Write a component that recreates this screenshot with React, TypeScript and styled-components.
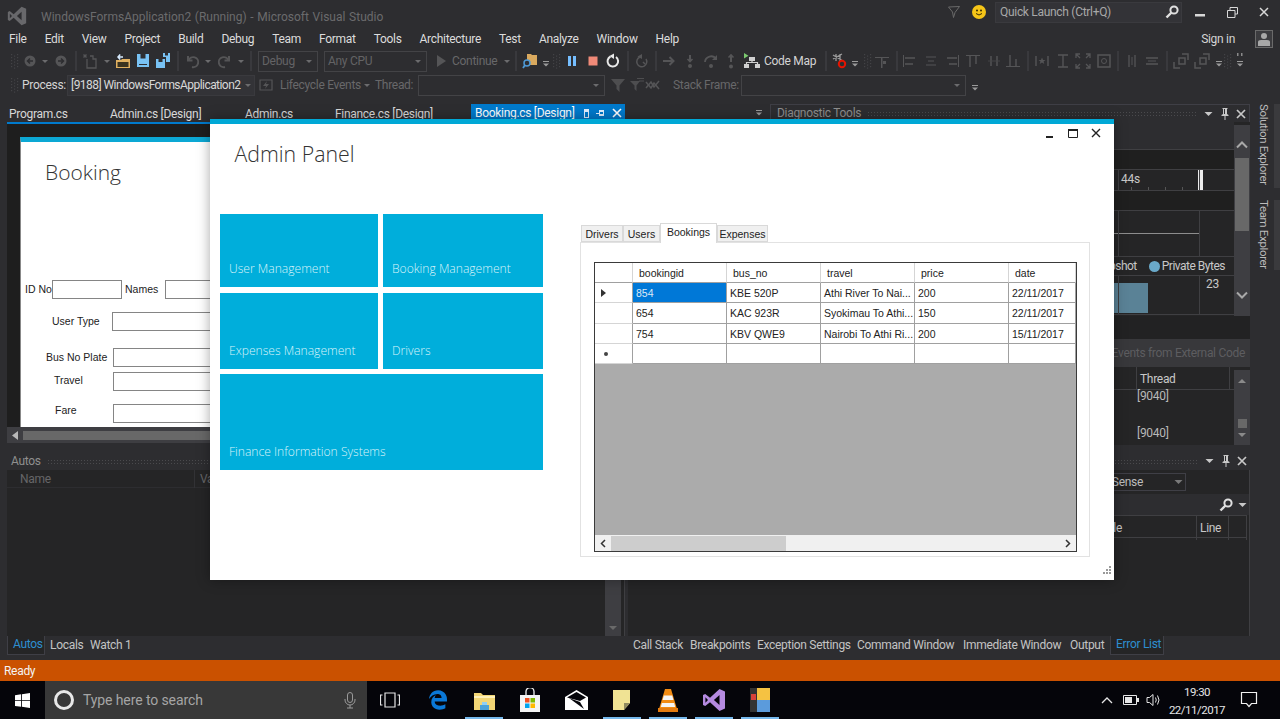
import React from "react";
import styled, { createGlobalStyle } from "styled-components";
import { FaEdgeLegacy } from "react-icons/fa6";

const UI = `Roboto, "Liberation Sans", sans-serif`;
const LIGHT = `"Open Sans", "Liberation Sans", sans-serif`;
const WIN = `"Liberation Sans", Arial, sans-serif`;

const Global = createGlobalStyle`
  html, body { margin: 0; padding: 0; background: #2d2d30; overflow: hidden; }
  * { box-sizing: border-box; }
`;

const Page = styled.div`
  position: relative; width: 1280px; height: 719px; overflow: hidden;
  background: #2d2d30; font-family: ${UI}; font-size: 12px; color: #d0d0d0; letter-spacing: -0.3px;
  display: flex; flex-direction: column;
`;

/* ---------- glyphs ---------- */
const D = "#555557";
const line = (d: string, c = D, w = 1.4) => <path d={d} fill="none" stroke={c} strokeWidth={w} />;
const fill = (d: string, c = D) => <path d={d} fill={c} />;
const BL = "#78c2f4";

const GLYPHS: Record<string, React.ReactNode> = {
  none: null,
  grip: <g fill="#434346">{[1, 4, 7, 10, 13].map((y) => <React.Fragment key={y}><rect x="5" y={y} width="1.2" height="1.2" /><rect x="8" y={y + 1.5} width="1.2" height="1.2" /><rect x="11" y={y} width="1.2" height="1.2" /></React.Fragment>)}</g>,
  sep: <rect x="7.5" y="-2" width="1" height="20" fill="#47474b" />,
  drop: fill("M5 7h6l-3 3z", "#6b6b6d"),
  more: <>{fill("M5 8h6v1H5z", "#9a9a9a")}{fill("M5 10.5h6l-3 3z", "#9a9a9a")}</>,
  back: <><circle cx="8" cy="8" r="5.5" fill={D} />{line("M11 8H6M8 5.5L5.5 8l2.5 2.5", "#2d2d30", 1.5)}</>,
  fwd: <><circle cx="8" cy="8" r="5.5" fill={D} />{line("M5 8h5M8 5.5L10.5 8 8 10.5", "#2d2d30", 1.5)}</>,
  newp: <>{line("M5 6v9h9V6h-3V3H8", D, 1.3)}{line("M3 1v4M1 3h4M1.5 1.5l3 3M4.5 1.5l-3 3", D, 1)}</>,
  folder: <>{fill("M1 7h5l1-1h8v9H1z", "#e0b060")}{fill("M2.5 9h11v5h-11z", "#3a3320")}{line("M8 4H3M5.2 1.5L3 4l2.2 2.5", "#d8ecff", 1.5)}</>,
  save: <>{fill("M2 1h12v13H2z", BL)}{fill("M5.5 1h5v4.500h-5z", "#2d2d30")}{fill("M4 11h8v1H4z", "#2d2d30")}</>,
  saveall: <>{fill("M1 6h9v9H1z", BL)}{fill("M3.5 6h4v3h-4z", "#2d2d30")}{fill("M8 0h7v9h-4V4H8z", BL)}{fill("M10 0h3v2.500h-3z", "#2d2d30")}</>,
  undo: <>{line("M4 3v4.500h4.500", D, 2)}{line("M4.5 7.500A5 5 0 1 1 8 14", D, 2)}</>,
  redo: <>{line("M12 3v4.500H7.500", D, 2)}{line("M11.5 7.500A5 5 0 1 0 8 14", D, 2)}</>,
  play: fill("M4 2l9 6-9 6z", "#555557"),
  find: <>{fill("M5 1h4l1 1h5v10H5z", "#d9a95e")}<circle cx="5" cy="10" r="3" fill="#2d2d30" stroke="#4f9ad6" strokeWidth="1.500" />{line("M3 12L1 15", "#4f9ad6", 1.8)}</>,
  pause: <>{fill("M4 3h3v10H4z", "#75beff")}{fill("M9 3h3v10H9z", "#75beff")}</>,
  stop: fill("M3.5 3.5h9v9h-9z", "#f08a78"),
  restart: <>{line("M5.500 3.500A5.300 5.300 0 1 0 11 4", "#e8e8e8", 2)}{fill("M9 0.500v5.500L4.500 3z", "#e8e8e8")}</>,
  greyed: <>{line("M6 4A5 5 0 1 0 12 6", D, 1.5)}{fill("M8 1v5L3.500 3.500z")}{line("M9 9l2 2", D, 1.500)}</>,
  stepNext: <>{line("M2 8h10", D, 2)}{line("M8.5 4L12.5 8l-4 4", D, 2)}</>,
  stepIn: <>{line("M8 2v6", D, 2)}{line("M5.500 6l2.500 2.500L10.500 6", D, 1.6)}<circle cx="8" cy="13" r="2" fill={D} /></>,
  stepOver: <>{line("M2 9A6 6 0 0 1 13 6", D, 1.8)}{fill("M14 2v5H9z")}<circle cx="8" cy="13" r="2" fill={D} /></>,
  stepOut: <>{line("M8 9V2", D, 2)}{line("M5.500 4.500L8 2l2.500 2.500", D, 1.6)}<circle cx="8" cy="13.5" r="2" fill={D} /></>,
  codemap: <>{fill("M5 4h6v4H5z", "#d0d0d0")}{fill("M0 11h5v4H0z", "#d0d0d0")}{fill("M11 11h5v4h-5z", "#d0d0d0")}{line("M8 8v1.500M2.500 11V9.500h11V11", "#d0d0d0", 1.2)}{fill("M0 0l4.500 2.800L0 5.500z", "#7bc96f")}</>,
  breaks: <>{line("M1 6L10 1M1 2l10 6M4 1v7M8 1v7", "#9a9a9a", 1.3)}<circle cx="10" cy="11" r="3.2" fill="#2d2d30" stroke="#e51400" strokeWidth="2" /></>,
  centerH: <>{fill("M1 4h14v1H1z")}{fill("M7 4h1.500v11H7z")}{fill("M9 8h3v3H9z")}</>,
  alignL: <>{fill("M1 2h1v12H1z")}{line("M3 5h10M3 11h8")}</>,
  alignC: <>{line("M3 4h10M5 8h6M3 12h10", D, 1.2)}</>,
  alignR: <>{fill("M14 2h1v12h-1z")}{line("M3 5h10M5 11h8")}</>,
  alignT: <>{fill("M1 2h14v1H1z")}{line("M5 3v11M11 3v8")}</>,
  alignM: <>{line("M5 3v10M11 3v10")}{fill("M2 7.500h12v1H2z", "#444446")}</>,
  alignB: <>{fill("M1 13h14v1H1z")}{line("M5 2v11M11 6v7")}</>,
  sizeH: <>{line("M2 3v10M14 3v10")}{fill("M8 4.500l1 2.500h2.500l-2 1.500 .8 2.500L8 9.500 5.700 11l.8-2.500-2-1.500H7z")}</>,
  sizeV: <>{line("M3 2h10M3 14h10")}{line("M8 2v12")}</>,
  sizeB: <>{line("M1 5V1h4M1 1l4 4M11 1h4v4M15 1l-4 4M15 11v4h-4M15 15l-4-4M5 15H1v-4M1 15l4-4", D, 1.3)}</>,
  tabO: <>{line("M2 2h12v12H2z", D, 1.5)}<circle cx="8" cy="8" r="2.500" fill="none" stroke={D} /></>,
  spaceH: <>{line("M5 2v12M11 2v12", D, 1.3)}{line("M8 4v8", D, 1)}</>,
  spaceV: <>{line("M2 5h12M2 11h12", D, 1.3)}{line("M4 8h8", D, 1)}</>,
  front: <>{line("M1 9v6h6M6 5h6v6H6zM9 1h6v6", D, 1.500)}</>,
  dotsMore: <>{fill("M5 0h1.500v3H5zM9 0h1.500v3H9z", "#8a8a8a")}{fill("M5 8h6v1H5z", "#9a9a9a")}{fill("M5 10.5h6l-3 3z", "#9a9a9a")}</>,
  life: <>{line("M2 3h12v10H2z", "#555557", 1.2)}{fill("M9 4L5 9h3l-1 3 4-5H8z", "#555557")}</>,
  funnel: fill("M1 2h14L9.500 8.500V15l-3-3V8.500z", "#4e4e50"),
  funnel2: <>{fill("M1 4h10L7.500 8.500V14l-2-2V8.500z", "#4e4e50")}{fill("M8 1h7v1H8zM10 3.500h5v1h-5z", "#4e4e50")}</>,
  stackBad: <>{line("M1 5l5 6 3-5 5 6", "#555557", 1.5)}{line("M1 11l5-6 3 5 5-6", "#555557", 1.5)}</>,
};

const Ico = styled.svg`
  width: 16px; height: 16px; flex: none; overflow: visible; display: block;
`;
const Glyph = ({ k }: { k: string }) => <Ico viewBox="0 0 16 16">{GLYPHS[k]}</Ico>;

/* ---------- title bar ---------- */
const TitleBar = styled.div`
  height: 28px; flex: none; display: flex; align-items: center; padding-left: 7px; position: relative;
`;
const LogoBox = styled.div`width: 34px; display: flex; align-items: center; margin-top: 4px;`;
const TitleText = styled.div`color: #6b6b6d; font-size: 12px; margin-top: 5px; flex: 1; white-space: nowrap; letter-spacing: 0; word-spacing: 0.7px;`;
const FilterOutline = styled.div`width: 24px; display: flex; justify-content: flex-start; margin-top: -4px;`;
const Smiley = styled.div`
  width: 14px; height: 14px; border-radius: 50%; background: #f5c518; margin-right: 9px; margin-top: -4px;
  display: flex; align-items: center; justify-content: center;
`;
const QuickLaunch = styled.div`
  width: 187px; height: 21px; margin-top: -4px; background: #333337; border: 1px solid #3a3a3e;
  display: flex; align-items: center; justify-content: space-between; padding: 0 2px 0 4px; color: #a8a8a8; font-size: 12px;
`;
const WinBtns = styled.div`display: flex; align-items: center; margin-top: -4px; padding-left: 2px;`;
const WinBtn = styled.div`width: 32px; height: 22px; display: flex; align-items: center; justify-content: center;`;

const VsLogo = ({ c = "#68686b", s = 20 }: { c?: string; s?: number }) => (
  <svg width={s} height={s} viewBox="0 0 24 24">
    <path fillRule="evenodd" fill={c} d="M17.500 1L23 3.400v17.200L17.500 23 8 14.200 3.200 18 1 16.900V7.100L3.200 6 8 9.800zM17.500 7l-5.600 5 5.600 5zM3.400 9.300v5.400L6 12z" />
  </svg>
);

/* ---------- menu ---------- */
const MenuBar = styled.div`
  height: 21px; flex: none; display: flex; align-items: center; padding: 0 7px 0 9px; position: relative; gap: 18px;
  color: #dcdcdc; font-size: 12px;
`;
const MenuItem = styled.span`white-space: nowrap;`;
const SignIn = styled.span`margin-left: auto; margin-right: 2px; color: #d4d4d4; margin-top: 1px;`;
const Avatar = styled.div`
  width: 18px; height: 18px; border: 1px solid #6a6a6a; background: #3c3c3f; display: flex; align-items: center; justify-content: center; overflow: hidden;
`;

/* ---------- toolbars ---------- */
const ToolBar = styled.div`
  height: 24px; flex: none; display: flex; align-items: center; padding-left: 8px; white-space: nowrap;
`;
const Cell = styled.div<{ $w: number; $ml?: number }>`
  width: ${(p) => p.$w}px; flex: none; display: flex; align-items: center; justify-content: center; height: 100%;
  margin-left: ${(p) => p.$ml ?? 0}px;
`;
const Combo = styled.div<{ $w: number; $ml?: number; $lit?: boolean }>`
  width: ${(p) => p.$w}px; height: 21px; flex: none; margin-left: ${(p) => p.$ml ?? 0}px;
  border: 1px solid ${(p) => (p.$lit ? "#3a3a3e" : "#434346")}; background: ${(p) => (p.$lit ? "#333337" : "#2d2d30")};
  color: ${(p) => (p.$lit ? "#d8d8d8" : "#636365")}; display: flex; align-items: center; justify-content: space-between;
  padding: 0 0 0 3px; font-size: 12px; overflow: hidden;
`;
const ComboText = styled.span<{ $tight?: boolean }>`
  white-space: nowrap; ${(p) => (p.$tight ? "letter-spacing: -0.55px;" : "")}
`;
const ToolText = styled.span<{ $w: number; $dim?: boolean; $ml?: number }>`
  width: ${(p) => p.$w}px; flex: none; color: ${(p) => (p.$dim ? "#68686a" : "#d4d4d4")}; white-space: nowrap;
  margin-left: ${(p) => p.$ml ?? 0}px;
`;

type TI = [number, string];
const TB1A: TI[] = [[12, "grip"], [20, "back"], [10, "drop"], [22, "fwd"], [8, "sep"], [20, "newp"], [14, "drop"], [18, "folder"], [22, "save"], [18, "saveall"], [12, "sep"], [16, "undo"], [16, "drop"], [18, "redo"], [14, "drop"], [6, "sep"]];
const TB1B: TI[] = [[14, "drop"], [4, "sep"], [24, "find"], [8, "more"], [12, "grip"], [20, "pause"], [22, "stop"], [18, "restart"], [12, "sep"], [16, "greyed"], [12, "sep"], [14, "stepNext"], [28, "stepIn"], [14, "stepOver"], [26, "stepOut"], [16, "codemap"]];
const TB1C: TI[] = [[5, "none"], [12, "sep"], [16, "breaks"], [14, "more"], [10, "grip"], [20, "centerH"], [10, "sep"], [16, "alignL"], [26, "alignC"], [16, "alignR"], [26, "alignT"], [16, "alignM"], [22, "alignB"], [8, "sep"], [20, "sizeH"], [22, "sizeV"], [18, "sizeB"], [24, "tabO"], [4, "sep"], [24, "spaceH"], [16, "spaceV"], [14, "sep"], [14, "front"], [28, "front"], [6, "more"], [10, "grip"], [16, "dotsMore"]];
const Cells = ({ items }: { items: TI[] }) => (
  <>{items.map(([w, k], i) => <Cell key={i} $w={w}><Glyph k={k} /></Cell>)}</>
);

/* ---------- workspace ---------- */
const Workspace = styled.div`flex: 1; min-height: 0; display: flex;`;
const Docking = styled.div`width: 1250px; flex: none; display: flex; flex-direction: column;`;
const TopRow = styled.div`height: 348px; flex: none; display: flex; padding-top: 7px;`;
const BottomRow = styled.div`height: 203px; margin-top: 7px; flex: none; display: flex; gap: 3px;`;

/* document column */
const DocCol = styled.div`width: 770px; flex: none; display: flex; flex-direction: column; padding: 0 0 2px 7px;`;
const DocTabs = styled.div`
  height: 20px; flex: none; display: flex; border-bottom: 2px solid #007acc; padding-left: 2px; color: #d8d8d8; font-size: 12px; position: relative;
`;
const DocTab = styled.div<{ $w: number }>`width: ${(p) => p.$w}px; flex: none; line-height: 20px; white-space: nowrap;`;
const ActiveTab = styled.div`
  width: 154px; flex: none; background: #007acc; color: #fff; padding-left: 4px; line-height: 20px; display: flex; align-items: center; white-space: nowrap; gap: 6px;
`;
const TabIcons = styled.div`display: flex; align-items: center; gap: 6px; margin-left: 2px;`;
const TabOverflow = styled.div`margin-left: auto; margin-right: 3px; margin-top: -2px;`;
const DocWell = styled.div`
  flex: 1; min-height: 0; background: #1e1e1e; padding: 13px 0 0 13px; overflow: hidden; display: flex;
`;
const DesignForm = styled.div`
  width: 300px; height: 290px; flex: none; background: #fff; border-top: 5px solid #0ca8d4; border-left: 1px solid #888; color: #222;
  font-family: ${WIN}; font-size: 10.5px; letter-spacing: 0;
`;
const FormTitle = styled.div`font-family: ${LIGHT}; font-weight: 300; font-size: 21px; color: #333; padding: 15px 0 0 24px; line-height: 30px; height: 137px;`;
const FormRow = styled.div<{ $top: number }>`display: flex; align-items: center; margin-top: ${(p) => p.$top}px; height: 20px;`;
const FormLabel = styled.div<{ $ml: number; $w: number; $up?: number }>`
  margin-left: ${(p) => p.$ml}px; width: ${(p) => p.$w}px; flex: none; white-space: nowrap; padding-bottom: ${(p) => p.$up ?? 0}px;
`;
const FormInput = styled.div<{ $w: number }>`width: ${(p) => p.$w}px; height: 19px; flex: none; border: 1px solid #858585; background: #fff;`;
const HScroll = styled.div`height: 16px; flex: none; background: #3e3e42; display: flex; align-items: center; gap: 5px; padding-left: 5px;`;
const HThumb = styled.div`width: 400px; height: 9px; background: #686868;`;

/* diagnostic column */
const DiagCol = styled.div`flex: 1; min-width: 0; display: flex; flex-direction: column;`;
const PaneHead = styled.div<{ $framed?: boolean; $pl?: number }>`
  height: 18px; flex: none; display: flex; align-items: center; padding-left: ${(p) => p.$pl ?? 6}px; gap: 6px;
  ${(p) => (p.$framed ? "border: 1px solid #3f3f46; border-bottom: 0;" : "")}
  color: #8f8f8f; font-size: 12px; line-height: 19px;
`;
const PaneDots = styled.div`
  flex: 1; height: 5px; background-image: radial-gradient(#4a4a4d 0.7px, transparent 0.8px); background-size: 3px 3px;
`;
const PaneBtns = styled.div`display: flex; align-items: center; gap: 3px; padding-right: 2px;`;
const PaneBtn = styled.div`width: 13px; display: flex; justify-content: center;`;

const DiagTop = styled.div`display: flex; height: 194px; flex: none; background: #252526;`;
const DiagRows = styled.div`width: 464px; flex: none; display: flex; flex-direction: column; background: #252526;`;
const DiagBand = styled.div<{ $h: number; $dark?: boolean }>`
  height: ${(p) => p.$h}px; flex: none; background: ${(p) => (p.$dark ? "#1f1f1f" : "#2d2d30")}; border-bottom: 1px solid #3f3f42;
`;
const DiagRow = styled.div<{ $h: number }>`
  height: ${(p) => p.$h}px; flex: none; display: grid; grid-template-columns: 349px 81px 34px; border-bottom: 1px solid #3f3f42; background: #252526; color: #c8c8c8; font-size: 12px;
`;
const DiagCell = styled.div`
  border-right: 1px solid #3f3f42; position: relative; min-width: 0; display: flex; flex-direction: column;
`;
const LastCell = styled.div`display: flex; align-items: flex-start; min-width: 0;`;
const RulerLabel = styled.div`padding: 2px 0 0 2px;`;
const RulerTicks = styled.div`
  margin-top: auto; height: 3px; background-image: linear-gradient(to right, #555 1px, transparent 1px); background-size: 17px 100%; background-position: 12px 0;
`;
const Marker = styled.div`width: 5px; height: 100%; background: #ececec; margin-left: -2px;`;
const ChartLine = styled.div`height: 1px; background: #8d8d8d; margin-top: 22px;`;
const Legend = styled.div`
  height: 19px; flex: none; display: flex; align-items: center; justify-content: flex-end; padding-right: 9px; gap: 2px; border-bottom: 1px solid #3f3f42; color: #c8c8c8; white-space: nowrap; letter-spacing: -0.5px;
`;
const LegendDot = styled.div`width: 11px; height: 11px; border-radius: 50%; background: #6aa9c9; margin-left: 10px;`;
const MemBar = styled.div<{ $w: string }>`width: ${(p) => p.$w}; height: 30px; background: #5a8296; margin-top: 7px;`;
const MemLabel = styled.div`padding: 1px 0 0 6px;`;
const VScroll = styled.div`
  width: 16px; flex: none; background: #3e3e42; display: flex; flex-direction: column; align-items: center; padding-top: 16px; margin-top: 3px;
`;
const VThumb = styled.div<{ $h: number; $w?: number; $mt?: number }>`
  width: ${(p) => p.$w ?? 14}px; height: ${(p) => p.$h}px; background: #686868; flex: none; margin-top: ${(p) => p.$mt ?? 0}px;
`;
const Chev = styled.svg<{ $mt?: number }>`width: 12px; height: 8px; flex: none; margin-top: ${(p) => p.$mt ?? 0}px; display: block;`;
const DarkStrip = styled.div`height: 23px; flex: none; background: #222223;`;
const EventsBar = styled.div`
  height: 28px; flex: none; background: #38383b; color: #5d5d60; display: flex; align-items: center; justify-content: flex-end; padding-right: 5px; white-space: nowrap; font-size: 12px;
`;
const EvTable = styled.div`flex: 1; min-height: 0; display: flex; background: #252526;`;
const EvMain = styled.div`width: 464px; flex: none; display: flex; flex-direction: column;`;
const EvHead = styled.div`
  height: 23px; flex: none; display: grid; grid-template-columns: 367px 93px; border-bottom: 1px solid #3f3f42; color: #c8c8c8; 
`;
const EvCol = styled.div`border-right: 1px solid #3f3f42; padding: 4px 0 0 3px; line-height: 17px;`;
const EvCell = styled.div`padding-left: 367px; line-height: 13px; color: #b8b8b8;`;
const EvSpacer = styled.div`height: 24px; flex: none;`;

/* bottom panes */
const Pane = styled.div<{ $w: number; $pl?: number }>`
  width: ${(p) => p.$w}px; flex: none; display: flex; flex-direction: column; padding-left: ${(p) => p.$pl ?? 0}px;
`;
const PaneBody = styled.div`flex: 1; min-height: 0; background: #252526; border-right: 1px solid #3f3f42; position: relative; display: flex; flex-direction: column;`;
const AutosHead = styled.div`height: 18px; flex: none; display: grid; grid-template-columns: 188px 1fr; color: #666668; border-bottom: 1px solid #2d2d30;`;
const AutosCol = styled.div`padding-left: 13px; line-height: 18px; border-right: 1px solid #323235;`;
const AutosValueCol = styled(AutosCol)`padding-left: 5px;`;
const AutosRest = styled.div`flex: 1; min-height: 0; display: flex; justify-content: flex-end;`;
const AutosScroll = styled.div`
  width: 16px; margin-right: 3px; background: #3e3e42; display: flex; flex-direction: column; align-items: center; justify-content: flex-end; padding-bottom: 4px;
`;
const BottomTabs = styled.div`height: 19px; flex: none; display: flex; align-items: stretch; color: #c4c4c4; white-space: nowrap;`;
const BotTab = styled.div<{ $w: number }>`width: ${(p) => p.$w}px; flex: none; line-height: 19px; padding-left: 5px;`;
const BotTabActive = styled.div<{ $w: number }>`
  width: ${(p) => p.$w}px; flex: none; color: #2d8ed0; line-height: 17px; padding-left: 5px; border: 1px solid #3f3f46; border-top: 0; background: #252526;
`;
const SelRow = styled.div`height: 24px; flex: none; display: flex; justify-content: flex-end; align-items: center; padding-right: 63px;`;
const SmallSelect = styled.div`
  width: 300px; height: 18px; border: 1px solid #3f3f46; color: #bdbdbd; display: flex; justify-content: flex-end; align-items: center; gap: 31px; padding-right: 2px;
`;
const SearchRow = styled.div`height: 21px; flex: none; background: #2d2d30; display: flex; justify-content: flex-end; align-items: center; padding-right: 2px; gap: 5px;`;
const ErrHead = styled.div`
  height: 23px; flex: none; margin: 0 2px 0 0; display: grid; grid-template-columns: 1fr 32px 18px; border-bottom: 1px solid #3f3f42; border-top: 1px solid #3f3f42; color: #c8c8c8;
`;
const ErrCol = styled.div`border-right: 1px solid #3f3f42; line-height: 24px; padding-left: 3px; white-space: nowrap;`;
const ErrColRight = styled(ErrCol)`text-align: right; padding-right: 74px;`;

/* rail */
const Rail = styled.div`flex: 1; padding-top: 7px; display: flex; flex-direction: column; gap: 12px; align-items: flex-end;`;
const RailItem = styled.div<{ $h: number }>`
  height: ${(p) => p.$h}px; width: 26px; border-right: 6px solid #3a3a3d; writing-mode: vertical-rl; color: #bcbcbc; font-size: 11.5px; letter-spacing: -0.35px; white-space: nowrap; line-height: 20px; display: flex; align-items: center;
`;

/* status + taskbar */
const StatusBar = styled.div`height: 21px; flex: none; background: #ca5100; color: #f4f4f4; padding-left: 4px; line-height: 22px;`;
const Taskbar = styled.div`height: 38px; flex: none; background: #05050a; display: flex; align-items: stretch; position: relative;`;
const StartBtn = styled.div`width: 45px; flex: none; display: flex; align-items: center; justify-content: center;`;
const SearchBox = styled.div`
  width: 322px; flex: none; background: #383838; display: flex; align-items: center; padding: 0 11px 0 9px; gap: 9px; color: #a5a5a5; font-size: 14px; letter-spacing: -0.1px;
`;
const Cortana = styled.div`width: 20px; height: 20px; border-radius: 50%; border: 3px solid #e8e8e8; flex: none;`;
const SearchHint = styled.div`flex: 1; white-space: nowrap;`;
const TaskIcon = styled.div<{ $on?: boolean; $ml?: number }>`
  width: 38px; flex: none; display: flex; align-items: center; justify-content: center; margin: 0 4px 0 ${(p) => p.$ml ?? 4}px;
  border-bottom: 2px solid ${(p) => (p.$on ? "#76b9ed" : "transparent")}; border-top: 2px solid transparent;
`;
const Tray = styled.div`margin-left: auto; display: flex; align-items: center; color: #e8e8e8; padding-right: 11px;`;
const TrayIcon = styled.div<{ $w: number }>`width: ${(p) => p.$w}px; display: flex; justify-content: center;`;
const Clock = styled.div`width: 64px; text-align: center; font-size: 11.5px; letter-spacing: -0.5px; line-height: 18px; color: #e6e6e6; padding-top: 2px;`;
const Notify = styled.div`width: 40px; display: flex; justify-content: center;`;

/* admin window (floats over the IDE) */
const AdminWindow = styled.div`
  position: absolute; left: 210px; top: 119px; width: 904px; height: 461px; background: #fff; border-top: 5px solid #00a8d6;
  box-shadow: 0 0 12px rgba(0,0,0,.35); display: flex; flex-direction: column; font-family: ${WIN}; letter-spacing: 0;
`;
const AdminHead = styled.div`height: 90px; flex: none; display: flex; align-items: flex-start; justify-content: space-between;`;
const AdminTitle = styled.div`font-family: ${LIGHT}; font-weight: 300; font-size: 21.3px; color: #333; padding: 15px 0 0 24.5px; line-height: 30px; white-space: nowrap;`;
const AdminBtns = styled.div`display: flex; padding: 2px 6px 0 0;`;
const AdminBtn = styled.div`width: 23.5px; height: 14px; display: flex; align-items: center; justify-content: center;`;
const AdminBody = styled.div`flex: 1; display: flex; padding-left: 10px; min-height: 0;`;
const TileGrid = styled.div`
  width: 323px; flex: none; display: grid; grid-template-columns: 158px 160px; grid-template-rows: 73px 76px 96px; gap: 5.5px 5px; align-content: start;
`;
const Tile = styled.div<{ $wide?: boolean }>`
  background: #00aedb; color: #d9f3fa; font-family: ${LIGHT}; font-weight: 300; font-size: 12.1px; padding: 0 0 10px 9px; display: flex; align-items: flex-end; white-space: nowrap;
  ${(p) => (p.$wide ? "grid-column: 1 / span 2;" : "")}
`;
const TabCtl = styled.div`width: 510px; margin-left: 37px; margin-top: 9px; flex: none; display: flex; flex-direction: column; height: 334px; position: relative;`;
const TabStrip = styled.div`height: 19px; flex: none; display: flex; align-items: flex-end; padding-left: 1px; font-size: 10.5px; color: #222;`;
const WinTab = styled.div<{ $w: number; $on?: boolean }>`
  width: ${(p) => p.$w}px; flex: none; height: ${(p) => (p.$on ? 20 : 17)}px; border: 1px solid #d9d9d9; background: ${(p) => (p.$on ? "#fff" : "#f0f0f0")}; margin-bottom: ${(p) => (p.$on ? -1 : 0)}px;
  border-bottom: ${(p) => (p.$on ? "0" : "1px solid #d9d9d9")}; text-align: center; line-height: ${(p) => (p.$on ? 17 : 16)}px; position: relative; z-index: ${(p) => (p.$on ? 1 : 0)};
`;
const TabPage = styled.div`flex: 1; border: 1px solid #e2e2e2; padding: 19px 14px 0 13px; min-height: 0;`;
const DataGrid = styled.div`
  width: 483px; height: 290px; border: 1.5px solid #3a3a3a; background: #ababab; display: flex; flex-direction: column; font-size: 10.5px; color: #222; overflow: hidden;
`;
const GridRow = styled.div<{ $h: number }>`
  height: ${(p) => p.$h}px; flex: none; display: grid; grid-template-columns: 38px repeat(4, 94px) 1fr; background: #fff;
`;
const GCell = styled.div<{ $head?: boolean; $sel?: boolean }>`
  border-right: 1px solid ${(p) => (p.$head ? "#d5d5d5" : "#a0a0a0")}; border-bottom: 1px solid #a0a0a0;
  padding-left: ${(p) => (p.$head ? 6 : 3)}px; line-height: 21px; white-space: nowrap; overflow: hidden;
  background: ${(p) => (p.$sel ? "#0078d7" : "#fff")}; color: ${(p) => (p.$sel ? "#dce9f6" : "#222")};
`;
const RowHead = styled.div`
  border-right: 1px solid #a0a0a0; border-bottom: 1px solid #d5d5d5; background: #fff; display: flex; align-items: center;
`;
const NewDot = styled.div`width: 4px; height: 4px; flex: none; border-radius: 50%; background: #444; margin-left: 9px;`;
const RowArrow = styled.div`
  width: 0; height: 0; flex: none; border-left: 5px solid #333; border-top: 4.5px solid transparent; border-bottom: 4.5px solid transparent; margin-left: 6px;
`;
const GridFill = styled.div`flex: 1; min-height: 0;`;
const GridScroll = styled.div`height: 16px; flex: none; background: #f0f0f0; display: flex; align-items: center; justify-content: flex-start;`;
const GridArrow = styled.div<{ $end?: boolean }>`
  width: 16px; flex: none; display: flex; justify-content: center; align-items: center; ${(p) => (p.$end ? "margin-left: auto;" : "")}
`;
const GridThumb = styled.div`width: 175px; height: 15px; background: #cdcdcd;`;
const Grip = styled.div`
  position: absolute; right: 2px; bottom: 2px; width: 12px; height: 12px;
`;

const TH = ["bookingid", "bus_no", "travel", "price", "date"];
const DATA = [
  ["854", "KBE 520P", "Athi River To Nai...", "200", "22/11/2017"],
  ["654", "KAC 923R", "Syokimau To Athi...", "150", "22/11/2017"],
  ["754", "KBV QWE9", "Nairobi To Athi Ri...", "200", "15/11/2017"],
];
const MENU = ["File", "Edit", "View", "Project", "Build", "Debug", "Team", "Format", "Tools", "Architecture", "Test", "Analyze", "Window", "Help"];
const TILES = ["User Management", "Booking Management", "Expenses Management", "Drivers"];

const PinIco = ({ c = "#c8c8c8" }: { c?: string }) => (
  <svg width="10" height="12" viewBox="0 0 10 12"><path d="M2.500 0h5v1H7v5l1.500 1v1H5.500v4h-1V8H1.500V7L3 6V1h-.5zM4 1v5h1V1z" fill={c} fillRule="evenodd" /></svg>
);
const XIco = ({ c = "#c8c8c8", s = 9, w = 1.7 }: { c?: string; s?: number; w?: number }) => (
  <svg width={s} height={s} viewBox="0 0 10 10"><path d="M1 1l8 8M9 1L1 9" stroke={c} strokeWidth={w} fill="none" /></svg>
);
const SearchIco = ({ c = "#e0e0e0", s = 14 }: { c?: string; s?: number }) => (
  <svg width={s} height={s} viewBox="0 0 14 14"><circle cx="9" cy="5" r="3.600" fill="none" stroke={c} strokeWidth="2" /><path d="M6.500 7.500L1.500 12.500" stroke={c} strokeWidth="2.400" /></svg>
);
const DropTri = ({ c = "#c8c8c8" }: { c?: string }) => (
  <svg width="9" height="6" viewBox="0 0 9 6"><path d="M.5 1h8L4.500 5z" fill={c} /></svg>
);
const PaneControls = () => (
  <PaneBtns>
    <PaneBtn><DropTri /></PaneBtn>
    <PaneBtn><PinIco /></PaneBtn>
    <PaneBtn><XIco s={10} /></PaneBtn>
  </PaneBtns>
);

export default function App() {
  return (
    <Page>
      <Global />
      <TitleBar>
        <LogoBox><VsLogo /></LogoBox>
        <TitleText>WindowsFormsApplication2 (Running) - Microsoft Visual Studio</TitleText>
        <FilterOutline>
          <svg width="12" height="12" viewBox="0 0 12 12"><path d="M.5 1l11-.5L7 6.500 5.500 11.500 4.500 6z" fill="none" stroke="#6a6a6a" /></svg>
        </FilterOutline>
        <Smiley>
          <svg width="12" height="12" viewBox="0 0 12 12"><circle cx="4" cy="4.500" r="1" fill="#3a2c00" /><circle cx="8" cy="4.500" r="1" fill="#3a2c00" /><path d="M3 7.500q3 3 6 0" fill="none" stroke="#3a2c00" /></svg>
        </Smiley>
        <QuickLaunch>
          <span>Quick Launch (Ctrl+Q)</span>
          <SearchIco />
        </QuickLaunch>
        <WinBtns>
          <WinBtn><svg width="10" height="10" viewBox="0 0 10 10"><rect y="7" width="10" height="2.500" fill="#d8d8d8" /></svg></WinBtn>
          <WinBtn><svg width="11" height="11" viewBox="0 0 11 11"><path d="M3 3V.5h7.500V7H8M.5 3.500H8V10.500H.5z" fill="none" stroke="#d8d8d8" /></svg></WinBtn>
          <WinBtn><XIco s={10} c="#d8d8d8" w={1.5} /></WinBtn>
        </WinBtns>
      </TitleBar>

      <MenuBar>
        {MENU.map((m) => <MenuItem key={m}>{m}</MenuItem>)}
        <SignIn>Sign in</SignIn>
        <Avatar>
          <svg width="14" height="16" viewBox="0 0 14 16"><circle cx="7" cy="5" r="3" fill="#a8a8a8" /><path d="M1 15v-4q0-2 3-2h6q3 0 3 2v4z" fill="#a8a8a8" /></svg>
        </Avatar>
      </MenuBar>

      <ToolBar>
        <Cells items={TB1A} />
        <Combo $w={60} $ml={4}><ComboText>Debug</ComboText><Glyph k="drop" /></Combo>
        <Combo $w={103} $ml={6}><ComboText>Any CPU</ComboText><Glyph k="drop" /></Combo>
        <Cell $w={22} $ml={3}><Glyph k="play" /></Cell>
        <ToolText $w={48} $dim>Continue</ToolText>
        <Cells items={TB1B} />
        <ToolText $w={51} $ml={4}>Code Map</ToolText>
        <Cells items={TB1C} />
      </ToolBar>

      <ToolBar>
        <Cell $w={12}><Glyph k="grip" /></Cell>
        <ToolText $w={45} $ml={2}>Process:</ToolText>
        <Combo $w={188} $lit>
          <ComboText $tight>[9188] WindowsFormsApplication2</ComboText>
          <Glyph k="drop" />
        </Combo>
        <Cell $w={22}><Glyph k="life" /></Cell>
        <ToolText $w={79} $ml={3} $dim>Lifecycle Events</ToolText>
        <Cell $w={16}><Glyph k="drop" /></Cell>
        <ToolText $w={43} $dim>Thread:</ToolText>
        <Combo $w={187}><ComboText /><Glyph k="drop" /></Combo>
        <Cell $w={26}><Glyph k="funnel" /></Cell>
        <Cell $w={12}><Glyph k="funnel2" /></Cell>
        <Cell $w={20}><Glyph k="stackBad" /></Cell>
        <ToolText $w={68} $ml={10} $dim>Stack Frame:</ToolText>
        <Combo $w={225}><ComboText /><Glyph k="drop" /></Combo>
        <Cell $w={18}><Glyph k="more" /></Cell>
      </ToolBar>

      <Workspace>
        <Docking>
          <TopRow>
            <DocCol>
              <DocTabs>
                <DocTab $w={101}>Program.cs</DocTab>
                <DocTab $w={135}>Admin.cs [Design]</DocTab>
                <DocTab $w={90}>Admin.cs</DocTab>
                <DocTab $w={136}>Finance.cs [Design]</DocTab>
                <ActiveTab>
                  Booking.cs [Design]
                  <TabIcons>
                    <svg width="7" height="9" viewBox="0 0 7 9"><path d="M1 0h5v9H1zM2 3v5h3V3z" fill="#dfefff" fillRule="evenodd" /></svg>
                    <svg width="10" height="9" viewBox="0 0 10 9"><path d="M0 4h3V1h5v6H3V5H0zM4 3v2h3V3z" fill="#dfefff" fillRule="evenodd" /></svg>
                    <XIco c="#fff" s={10} w={1.6} />
                  </TabIcons>
                </ActiveTab>
                <TabOverflow><Glyph k="more" /></TabOverflow>
              </DocTabs>
              <DocWell>
                <DesignForm>
                  <FormTitle>Booking</FormTitle>
                  <FormRow $top={0}>
                    <FormLabel $ml={4} $w={27}>ID No</FormLabel><FormInput $w={70} />
                    <FormLabel $ml={3} $w={40}>Names</FormLabel><FormInput $w={100} />
                  </FormRow>
                  <FormRow $top={12}>
                    <FormLabel $ml={31} $w={60}>User Type</FormLabel><FormInput $w={200} />
                  </FormRow>
                  <FormRow $top={16}>
                    <FormLabel $ml={25} $w={67}>Bus No Plate</FormLabel><FormInput $w={200} />
                  </FormRow>
                  <FormRow $top={4}>
                    <FormLabel $ml={33} $w={59} $up={2}>Travel</FormLabel><FormInput $w={200} />
                  </FormRow>
                  <FormRow $top={12}>
                    <FormLabel $ml={34} $w={58} $up={6}>Fare</FormLabel><FormInput $w={200} />
                  </FormRow>
                </DesignForm>
              </DocWell>
              <HScroll>
                <svg width="6" height="9" viewBox="0 0 6 9"><path d="M6 0v9L0 4.500z" fill="#b8b8b8" /></svg>
                <HThumb />
              </HScroll>
            </DocCol>
            <DiagCol>
              <PaneHead $framed>
                Diagnostic Tools
                <PaneDots />
                <PaneControls />
              </PaneHead>
              <DiagTop>
                <DiagRows>
                  <DiagBand $h={28} />
                  <DiagBand $h={20} $dark />
                  <DiagRow $h={21}>
                    <DiagCell />
                    <DiagCell><RulerLabel>44s</RulerLabel><RulerTicks /></DiagCell>
                    <LastCell><Marker /></LastCell>
                  </DiagRow>
                  <DiagBand $h={20} $dark />
                  <DiagRow $h={46}>
                    <DiagCell><ChartLine /></DiagCell>
                    <DiagCell><ChartLine /></DiagCell>
                    <LastCell />
                  </DiagRow>
                  <Legend>Snapshot<LegendDot />Private Bytes</Legend>
                  <DiagRow $h={39}>
                    <DiagCell><MemBar $w="100%" /></DiagCell>
                    <DiagCell><MemBar $w="29px" /></DiagCell>
                    <LastCell><MemLabel>23</MemLabel></LastCell>
                  </DiagRow>
                </DiagRows>
                <VScroll>
                  <Chev viewBox="0 0 12 8"><path d="M1 6.500L6 1.500l5 5" fill="none" stroke="#a8a8a8" strokeWidth="2" /></Chev>
                  <VThumb $h={73} $mt={9} />
                  <Chev $mt={60} viewBox="0 0 12 8"><path d="M1 1.500l5 5 5-5" fill="none" stroke="#a8a8a8" strokeWidth="2" /></Chev>
                </VScroll>
              </DiagTop>
              <DarkStrip />
              <EventsBar>Show Events from External Code</EventsBar>
              <EvTable>
                <EvMain>
                  <EvHead><EvCol /><EvCol>Thread</EvCol></EvHead>
                  <EvCell>[9040]</EvCell>
                  <EvSpacer />
                  <EvCell>[9040]</EvCell>
                </EvMain>
                <VScroll>
                  <Chev $mt={-9} viewBox="0 0 12 8"><path d="M2 6l4-4 4 4z" fill="#8a8a8a" /></Chev>
                  <VThumb $h={9} $w={9} $mt={34} />
                  <Chev $mt={3} viewBox="0 0 12 8"><path d="M2 2l4 4 4-4z" fill="#8a8a8a" /></Chev>
                </VScroll>
              </EvTable>
            </DiagCol>
          </TopRow>

          <BottomRow>
            <Pane $w={625} $pl={7}>
              <PaneHead $pl={4}>
                Autos
                <PaneDots />
              </PaneHead>
              <PaneBody>
                <AutosHead><AutosCol>Name</AutosCol><AutosValueCol>Value</AutosValueCol></AutosHead>
                <AutosRest>
                  <AutosScroll>
                    <Chev viewBox="0 0 12 8"><path d="M2 2l4 4 4-4z" fill="#6a6a6a" /></Chev>
                  </AutosScroll>
                </AutosRest>
              </PaneBody>
              <BottomTabs>
                <BotTabActive $w={38}>Autos</BotTabActive>
                <BotTab $w={40}>Locals</BotTab>
                <BotTab $w={60}>Watch 1</BotTab>
              </BottomTabs>
            </Pane>
            <Pane $w={622}>
              <PaneHead>
                Error List
                <PaneDots />
                <PaneControls />
              </PaneHead>
              <PaneBody>
                <SelRow>
                  <SmallSelect>Build + IntelliSense <DropTri c="#7a7a7a" /></SmallSelect>
                </SelRow>
                <SearchRow><SearchIco c="#e0e0e0" s={14} /><DropTri c="#c8c8c8" /></SearchRow>
                <ErrHead>
                  <ErrColRight>File</ErrColRight>
                  <ErrCol>Line</ErrCol>
                  <ErrCol />
                </ErrHead>
              </PaneBody>
              <BottomTabs>
                <BotTab $w={57}>Call Stack</BotTab>
                <BotTab $w={67}>Breakpoints</BotTab>
                <BotTab $w={100}>Exception Settings</BotTab>
                <BotTab $w={106}>Command Window</BotTab>
                <BotTab $w={107}>Immediate Window</BotTab>
                <BotTab $w={45}>Output</BotTab>
                <BotTabActive $w={54}>Error List</BotTabActive>
              </BottomTabs>
            </Pane>
          </BottomRow>
        </Docking>
        <Rail>
          <RailItem $h={84}>Solution Explorer</RailItem>
          <RailItem $h={70}>Team Explorer</RailItem>
        </Rail>
      </Workspace>

      <StatusBar>Ready</StatusBar>

      <Taskbar>
        <StartBtn>
          <svg width="15" height="15" viewBox="0 0 16 16"><path d="M0 2.300l6.500-.9v6.200H0zM7.400 1.300L16 0v7.600H7.400zM0 8.500h6.500v6.200L0 13.800zM7.400 8.500H16V16l-8.600-1.300z" fill="#fff" /></svg>
        </StartBtn>
        <SearchBox>
          <Cortana />
          <SearchHint>Type here to search</SearchHint>
          <svg width="12" height="17" viewBox="0 0 12 17"><rect x="3.500" y=".5" width="5" height="10" rx="2.500" fill="none" stroke="#9a9a9a" /><path d="M1 7v1a5 5 0 0 0 10 0V7M6 13v3M3 16h6" fill="none" stroke="#9a9a9a" /></svg>
        </SearchBox>
        <TaskIcon>
          <svg width="20" height="16" viewBox="0 0 20 16"><path d="M5 1h10v14H5zM2.500 3H.5v10h2M17.500 3h2v10h-2" fill="none" stroke="#e6e6e6" strokeWidth="1.200" /></svg>
        </TaskIcon>
        <TaskIcon $ml={6}><FaEdgeLegacy size={20} color="#0a78d7" /></TaskIcon>
        <TaskIcon $on>
          <svg width="21" height="19" viewBox="0 0 21 19"><path d="M0 2h7l2 2h12v15H0z" fill="#f2d675" /><path d="M0 5h21v2H0z" fill="#fff1b8" /><path d="M6 14h9v5H6z" fill="#4ba3d9" /><path d="M8 11h5v3H8z" fill="#8fd0f5" /></svg>
        </TaskIcon>
        <TaskIcon>
          <svg width="22" height="24" viewBox="0 0 22 24"><path d="M1 7h20v17H1z" fill="#f4f4f4" /><path d="M7 7V3.500a4 4 0 0 1 8 0V7" fill="none" stroke="#f4f4f4" strokeWidth="1.300" /><path d="M6 10h4.500v4.500H6z" fill="#f25022" /><path d="M11.500 10H16v4.500h-4.500z" fill="#7fba00" /><path d="M6 15.500h4.500V20H6z" fill="#00a4ef" /><path d="M11.500 15.500H16V20h-4.500z" fill="#ffb900" /></svg>
        </TaskIcon>
        <TaskIcon>
          <svg width="23" height="20" viewBox="0 0 23 20"><path d="M0 7L11.500 0 23 7v13H0z" fill="#fff" /><path d="M2 7.500L11.500 2 21 7.500 15 11z" fill="#05050a" /><path d="M4 8l11 4 4 7z" fill="#05050a" /></svg>
        </TaskIcon>
        <TaskIcon $on>
          <svg width="18" height="20" viewBox="0 0 18 20"><path d="M0 0h17v13l-6 7H0z" fill="#f0e394" /><path d="M17 13h-6v7z" fill="#8f8a60" /></svg>
        </TaskIcon>
        <TaskIcon $on>
          <svg width="20" height="24" viewBox="0 0 20 24"><path d="M7 1h6l6 20H1z" fill="#f28c13" /><path d="M5.800 7.500h8.400l1.200 4.500H4.600z" fill="#f5f5f5" /><path d="M3.800 15h12.400l1 4H2.800z" fill="#f5f5f5" /><path d="M0 20h20v4H0z" fill="#e57c10" /></svg>
        </TaskIcon>
        <TaskIcon $on><VsLogo c="#b58ae0" s={24} /></TaskIcon>
        <TaskIcon $on>
          <svg width="20" height="24" viewBox="0 0 20 24"><path d="M0 0h7v24H0z" fill="#333" /><path d="M1 6h5v6H1z" fill="#d8433a" /><path d="M7 0h13v12H7z" fill="#f5c242" /><path d="M7 12h13v12H7z" fill="#5b9bdc" /></svg>
        </TaskIcon>
        <Tray>
          <TrayIcon $w={24}><svg width="12" height="8" viewBox="0 0 12 8"><path d="M1 7l5-5 5 5" fill="none" stroke="#e6e6e6" strokeWidth="1.300" /></svg></TrayIcon>
          <TrayIcon $w={24}><svg width="16" height="10" viewBox="0 0 16 10"><path d="M.5 .5h13v9H.5z" fill="none" stroke="#e6e6e6" /><path d="M2 2h7v6H2z" fill="#e6e6e6" /><path d="M14 3h2v4h-2z" fill="#e6e6e6" /></svg></TrayIcon>
          <TrayIcon $w={22}><svg width="16" height="16" viewBox="0 0 16 16"><path d="M1 5.500h2.500L7 2.500v11l-3.500-3H1z" fill="none" stroke="#e6e6e6" /><path d="M9.500 5.500q1.500 2.500 0 5M11.500 3.500q3 4.500 0 9" fill="none" stroke="#e6e6e6" /></svg></TrayIcon>
          <Clock>19:30<br />22/11/2017</Clock>
          <Notify><svg width="18" height="18" viewBox="0 0 18 18"><path d="M1.500 1.500h15v11h-5l-2.500 3-2.500-3h-5z" fill="none" stroke="#f0f0f0" strokeWidth="1.200" /></svg></Notify>
        </Tray>
      </Taskbar>

      <AdminWindow>
        <AdminHead>
          <AdminTitle>Admin Panel</AdminTitle>
          <AdminBtns>
            <AdminBtn><svg width="9" height="10" viewBox="0 0 9 10"><rect x="1" y="8" width="7" height="2" fill="#222" /></svg></AdminBtn>
            <AdminBtn><svg width="10" height="9" viewBox="0 0 10 9"><path d="M.5 1h9v7.500h-9z" fill="none" stroke="#222" /><rect width="10" height="2" fill="#222" /></svg></AdminBtn>
            <AdminBtn><XIco s={10} c="#222" w={1.4} /></AdminBtn>
          </AdminBtns>
        </AdminHead>
        <AdminBody>
          <TileGrid>
            {TILES.map((t) => <Tile key={t}>{t}</Tile>)}
            <Tile $wide>Finance Information Systems</Tile>
          </TileGrid>
          <TabCtl>
            <TabStrip>
              <WinTab $w={42}>Drivers</WinTab>
              <WinTab $w={37}>Users</WinTab>
              <WinTab $w={57} $on>Bookings</WinTab>
              <WinTab $w={51}>Expenses</WinTab>
            </TabStrip>
            <TabPage>
              <DataGrid>
                <GridRow $h={20}>
                  <GCell $head />
                  {TH.map((h) => <GCell key={h} $head>{h}</GCell>)}
                </GridRow>
                {DATA.map((r, i) => (
                  <GridRow key={r[0]} $h={i === 1 ? 21 : 20}>
                    <RowHead>{i === 0 && <RowArrow />}</RowHead>
                    {r.map((c, j) => <GCell key={j} $sel={i === 0 && j === 0}>{c}</GCell>)}
                  </GridRow>
                ))}
                <GridRow $h={20}>
                  <RowHead><NewDot /></RowHead>
                  {TH.map((h) => <GCell key={h} />)}
                </GridRow>
                <GridFill />
                <GridScroll>
                  <GridArrow><svg width="6" height="9" viewBox="0 0 6 9"><path d="M5 1L1.500 4.500 5 8" fill="none" stroke="#333" strokeWidth="1.500" /></svg></GridArrow>
                  <GridThumb />
                  <GridArrow $end><svg width="6" height="9" viewBox="0 0 6 9"><path d="M1 1l3.500 3.500L1 8" fill="none" stroke="#333" strokeWidth="1.500" /></svg></GridArrow>
                </GridScroll>
              </DataGrid>
            </TabPage>
          </TabCtl>
        </AdminBody>
        <Grip>
          <svg width="12" height="12" viewBox="0 0 12 12" fill="#9a9a9a"><rect x="9" y="0" width="2" height="2" /><rect x="6" y="3" width="2" height="2" /><rect x="9" y="3" width="2" height="2" /><rect x="3" y="6" width="2" height="2" /><rect x="6" y="6" width="2" height="2" /><rect x="9" y="6" width="2" height="2" /></svg>
        </Grip>
      </AdminWindow>
    </Page>
  );
}
